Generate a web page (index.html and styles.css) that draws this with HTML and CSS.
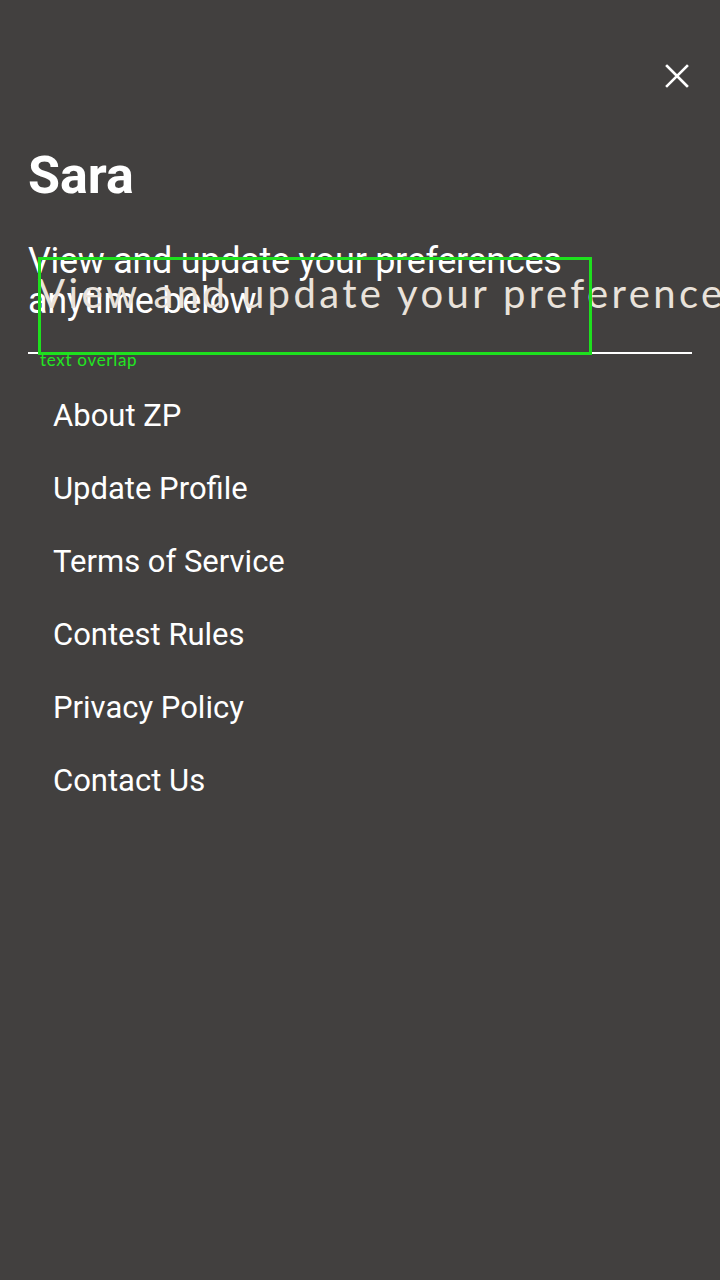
FILE: index.html
```html
<!DOCTYPE html>
<html>
<head>
<meta charset="utf-8">
<link rel="stylesheet" href="styles.css">
</head>
<body>
<div class="screen">
  <div class="topbar">
    <svg class="close" width="24" height="24" viewBox="0 0 24 24"><path d="M2 2 L22 22 M22 2 L2 22" stroke="#fff" stroke-width="2.6" stroke-linecap="square"/></svg>
  </div>
  <div class="header">
    <h1 class="name">Sara</h1>
    <p class="sub">View and update your preferences anytime below</p>
    <div class="ghost">View and update your preferences anytime below</div>
    <div class="flag"><span class="flag-label">text overlap</span></div>
  </div>
  <ul class="menu">
    <li>About ZP</li>
    <li>Update Profile</li>
    <li>Terms of Service</li>
    <li>Contest Rules</li>
    <li>Privacy Policy</li>
    <li>Contact Us</li>
  </ul>
</div>
</body>
</html>
```
FILE: styles.css
```css
html, body {
  margin: 0;
  padding: 0;
  background: #42403f;
  overflow: hidden;
}
.screen {
  width: 720px;
  height: 1280px;
  background: #42403f;
  font-family: Roboto, "Liberation Sans", sans-serif;
  color: #fff;
  position: relative;
  overflow: hidden;
}
.topbar {
  display: flex;
  justify-content: flex-end;
  padding: 64px 31px 0 0;
  height: 24px;
}
.close { display: block; }
.header {
  position: relative;
  margin: 0 28px;
  border-bottom: 2px solid #fff;
  padding-bottom: 31px;
}
.name {
  margin: 58px 0 0 0;
  font-size: 52px;
  font-weight: 700;
  line-height: 60px;
}
.sub {
  margin: 35px 0 0 0;
  font-size: 36px;
  line-height: 40px;
  width: 600px;
  letter-spacing: -0.3px;
}
.ghost {
  position: absolute;
  left: 10px;
  top: 125px;
  font-family: Lato, "DejaVu Sans", sans-serif;
  font-weight: 400;
  font-size: 40px;
  letter-spacing: 3.4px;
  line-height: 44px;
  color: #e9e2da;
  white-space: nowrap;
}
.flag {
  position: absolute;
  left: 10px;
  top: 111px;
  width: 548px;
  height: 92px;
  border: 3px solid #1ee01e;
}
.flag-label {
  position: absolute;
  left: -1px;
  top: 92px;
  font-family: Lato, "DejaVu Sans", sans-serif;
  font-weight: 400;
  font-size: 17px;
  letter-spacing: 0.7px;
  line-height: 16px;
  color: #22e622;
  white-space: nowrap;
}
.menu {
  list-style: none;
  margin: 0;
  padding: 44px 0 0 53px;
  display: flex;
  flex-direction: column;
  gap: 37px;
}
.menu li {
  font-size: 31px;
  line-height: 36px;
}
```
